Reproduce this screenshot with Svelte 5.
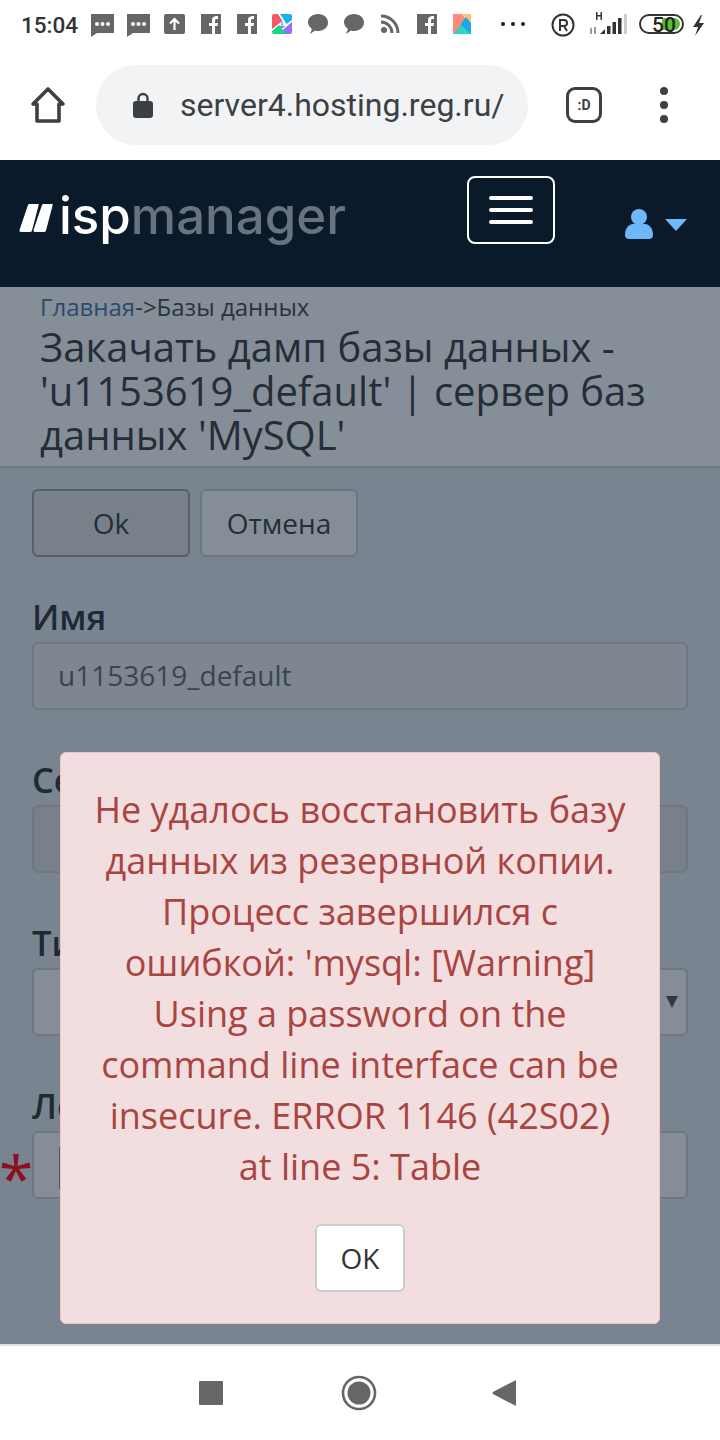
<script>
  const fields = [
    { label: "Имя", value: "u1153619_default", kind: "readonly" },
    { label: "Сервер", value: "", kind: "dim" },
    { label: "Тип", value: "", kind: "select" },
    { label: "Логин", value: "", kind: "required" }
  ];
</script>

<div class="phone">
  <div class="status">
    <span class="time">15:04</span>
    <svg class="icons" width="720" height="50" viewBox="0 0 720 50">
      <!-- chat -->
      <path fill="#666" d="M91 14h23v19H97l-6 4z"/>
      <g fill="#fff"><circle cx="97" cy="24" r="2"/><circle cx="102.500" cy="24" r="2"/><circle cx="108" cy="24" r="2"/></g>
      <path fill="#666" d="M127 14h23v19h-17l-6 4z"/>
      <g fill="#fff"><circle cx="133" cy="24" r="2"/><circle cx="138.500" cy="24" r="2"/><circle cx="144" cy="24" r="2"/></g>
      <!-- upload -->
      <rect x="164" y="14" width="21" height="20" rx="2" fill="#666"/>
      <path fill="none" stroke="#fff" stroke-width="2.200" d="M174.500 30v-11M170 23.500l4.500-4.500 4.500 4.500"/>
      <!-- fb -->
      <rect x="201" y="14" width="20" height="20" fill="#666"/>
      <path fill="#fff" d="M212 34v-8h-3v-3h3v-3c0-3 2-4 6-4v3c-2 0-3 0-3 2v2h3l-.5 3H215v8z"/>
      <rect x="237" y="14" width="20" height="20" fill="#666"/>
      <path fill="#fff" d="M248 34v-8h-3v-3h3v-3c0-3 2-4 6-4v3c-2 0-3 0-3 2v2h3l-.5 3H251v8z"/>
      <!-- colored app -->
      <path fill="#f4596b" d="M272 16q0-2 2-2h4l4.500 7-10.500 8z"/>
      <path fill="#18b4f0" d="M280 14h10q2 0 2 2v4l-5.500 4z"/>
      <path fill="#9b6cf5" d="M292 22v10q0 2-2 2h-5l-3.500-3z"/>
      <path fill="#16d68c" d="M272 31l7-6 7 9h-12q-2 0-2-2z"/>
      <path fill="none" stroke="#5a9bd8" stroke-width="1.300" d="M282 22v5M279.500 26q2.500 3 5 0"/>
      <!-- bubbles -->
      <path fill="#666" d="M318 14c6 0 10 4 10 8.500S324 31 318 31c-1 0-2 0-3-.5L310 34l2-5c-2-1.500-4-4-4-6.500 0-4.500 4-8.500 10-8.500z"/>
      <path fill="#666" d="M354 14c6 0 10 4 10 8.500S360 31 354 31c-1 0-2 0-3-.5L346 34l2-5c-2-1.500-4-4-4-6.500 0-4.500 4-8.500 10-8.500z"/>
      <!-- rss -->
      <circle cx="384" cy="30" r="3" fill="#666"/>
      <path fill="none" stroke="#666" stroke-width="3" d="M381 22a11 11 0 0 1 11 11M381 16a17 17 0 0 1 17 17"/>
      <rect x="417" y="14" width="20" height="20" fill="#666"/>
      <path fill="#fff" d="M428 34v-8h-3v-3h3v-3c0-3 2-4 6-4v3c-2 0-3 0-3 2v2h3l-.5 3H431v8z"/>
      <!-- second colored app -->
      <path fill="#ff8a7a" d="M453 14h9l9 11-5-1-9 10h-4z"/>
      <path fill="#ffc56e" d="M462 14h9v9z"/>
      <path fill="#1aa9e8" d="M471 23v11h-1l-10-9 6-8z"/>
      <path fill="#2fd4c0" d="M453 34l8-9 10 9z"/>
      <!-- dots -->
      <g fill="#222"><rect x="501" y="22" width="4" height="4" rx="2"/><rect x="511" y="22" width="4" height="4" rx="2"/><rect x="521" y="22" width="4" height="4" rx="2"/></g>
      <!-- R -->
      <circle cx="563" cy="25" r="10.500" fill="none" stroke="#333" stroke-width="2"/>
      <path fill="none" stroke="#333" stroke-width="2" d="M560 31V20h4a3 3 0 0 1 0 6h-4M564 26l3 5"/>
      <!-- signal -->
      <path fill="#333" d="M596 12h1.500v3h3v-3h1.500v8h-1.500v-3.500h-3V20H596z"/>
      <path fill="#999" d="M590 29l2-2v7h-2zM594 27h2v7h-2z"/>
      <path fill="#333" d="M600 34l5-5v5zM607 26h3.500v8H607zM612.500 22h3.500v12h-3.500zM618 18h3.500v16H618z"/>
      <rect x="624" y="14" width="3" height="20" fill="#ccc"/>
      <!-- battery -->
      <rect x="640" y="15" width="43" height="18" rx="9" fill="none" stroke="#333" stroke-width="2"/>
      <path fill="#5cc030" d="M662 18h12a6 6 0 0 1 0 12h-12z"/>
      <path fill="#333" d="M701 15l-8 12h5l-3 9 9-13h-5l3-8z"/>
    </svg>
    <span class="batt">50</span>
  </div>

  <div class="toolbar">
    <svg class="home" width="36" height="38" viewBox="0 0 36 38">
      <path fill="none" stroke="#3c4043" stroke-width="3.600" stroke-linejoin="round" d="M18 3L3 18h4v17h22V18h4z"/>
    </svg>
    <div class="omni">
      <svg width="20" height="26" viewBox="0 0 20 26">
        <path fill="none" stroke="#3c4043" stroke-width="2.400" d="M5.500 11V6.500a4.500 4.500 0 0 1 9 0V11"/>
        <rect x="0" y="9" width="20" height="17" rx="3" fill="#3c4043"/>
      </svg>
      <span>server4.hosting.reg.ru/</span>
    </div>
    <div class="tabs"><span>:D</span></div>
    <svg class="kebab" width="10" height="36" viewBox="0 0 10 36">
      <g fill="#3c4043"><circle cx="5" cy="4" r="4"/><circle cx="5" cy="18" r="4"/><circle cx="5" cy="32" r="4"/></g>
    </svg>
  </div>

  <header class="top">
    <div class="logo">
      <svg width="34" height="28" viewBox="0 0 34 28">
        <path fill="#fff" d="M9 1q.4-1 1.500-1H19q1 0 .7 1L13 26.500q-.4 1.500-2 1.500H2q-2 0-1.500-2zM23 1q.4-1 1.500-1H33q1 0 .7 1L27 26.500q-.4 1.500-2 1.500h-9q-2 0-1.500-2z"/>
      </svg>
      <span class="isp">isp</span><span class="mgr">manager</span>
    </div>
    <button class="burger" aria-label="menu"><i></i><i></i><i></i></button>
    <div class="user">
      <svg width="30" height="32" viewBox="0 0 30 32">
        <circle cx="15" cy="9" r="8" fill="#6fb8f8"/>
        <path fill="#6fb8f8" d="M1 27c0-7 4-11 8-11h12c4 0 8 4 8 11 0 3-2 4-4 4H5c-2 0-4-1-4-4z"/>
      </svg>
      <svg width="22" height="13" viewBox="0 0 22 13"><path fill="#6fb8f8" d="M0 1h22L11 13z"/></svg>
    </div>
  </header>

  <main class="content">
    <section class="head">
      <div class="crumbs"><a href="#top">Главная</a>-&gt;Базы данных</div>
      <h1>Закачать дамп базы данных - 'u1153619_default' | сервер баз данных 'MySQL'</h1>
    </section>
    <section class="form">
      <div class="actions">
        <button class="act primary">Ok</button>
        <button class="act">Отмена</button>
      </div>
      {#each fields as f}
        <div class="field">
          <div class="lbl">{f.label}</div>
          <div class="inp {f.kind}">
            {f.value}
            {#if f.kind === "select"}<span class="arrow"></span>{/if}
            {#if f.kind === "required"}<span class="star">*</span><span class="cursor"></span>{/if}
          </div>
        </div>
      {/each}
    </section>

    <div class="modal">
      <p>Не удалось восстановить базу данных из резервной копии. Процесс завершился с ошибкой: 'mysql: [Warning] Using a password on the command line interface can be insecure. ERROR 1146 (42S02) at line 5: Table</p>
      <button class="ok">OK</button>
    </div>
  </main>

  <nav class="bottom">
    <svg width="24" height="24" viewBox="0 0 24 24"><rect width="24" height="24" rx="1" fill="#666"/></svg>
    <svg width="36" height="36" viewBox="0 0 36 36">
      <circle cx="18" cy="18" r="16" fill="none" stroke="#666" stroke-width="2.600"/>
      <circle cx="18" cy="18" r="11.500" fill="#666"/>
    </svg>
    <svg width="24" height="26" viewBox="0 0 24 26"><path fill="#666" d="M24 1v24q0 1-1 .5L1 14q-1-1 0-2L23 .500q1-.5 1 .5z"/></svg>
  </nav>
</div>

<style>
  :global(body) {
    margin: 0;
    background: #fff;
  }

  .phone {
    width: 720px;
    height: 1440px;
    display: flex;
    flex-direction: column;
    overflow: hidden;
    font-family: "Open Sans", sans-serif;
  }

  .status {
    position: relative;
    height: 50px;
    flex: none;
    background: #fff;
  }

  .icons {
    position: absolute;
    top: 0;
    left: 0;
  }

  .time {
    position: absolute;
    left: 21px;
    top: 12px;
    font: 500 22.500px/26px Roboto, sans-serif;
    color: #333;
  }

  .batt {
    position: absolute;
    left: 652px;
    top: 12px;
    font: 500 21px/26px Roboto, sans-serif;
    color: #222;
  }

  .toolbar {
    height: 110px;
    flex: none;
    display: flex;
    align-items: center;
    background: #fff;
  }

  .home {
    margin-left: 30px;
  }

  .omni {
    margin-left: 30px;
    width: 432px;
    height: 80px;
    box-sizing: border-box;
    padding-left: 37px;
    display: flex;
    align-items: center;
    gap: 27px;
    border-radius: 40px;
    background: #f1f3f4;
    color: #3c4043;
    font: 400 32px/36px Roboto, sans-serif;
    white-space: nowrap;
  }

  .tabs {
    margin-left: 38px;
    width: 36px;
    height: 36px;
    box-sizing: border-box;
    border: 3.500px solid #3c4043;
    border-radius: 9px;
    display: flex;
    align-items: center;
    justify-content: center;
    color: #3c4043;
    font: 700 14px/1 Roboto, sans-serif;
  }

  .kebab {
    margin-left: 57px;
  }

  .top {
    height: 127px;
    flex: none;
    position: relative;
    display: flex;
    align-items: flex-start;
    background: #0a1a2a;
  }

  .logo {
    margin: 26px 0 0 19px;
    width: 429px;
    display: flex;
    align-items: center;
    font: 500 51px/60px Inter, sans-serif;
    white-space: nowrap;
  }

  .logo svg {
    margin: 4px 6px 0 0;
  }

  .isp {
    color: #fff;
  }

  .mgr {
    color: #68737f;
  }

  .burger {
    margin: 16px 0 0 19px;
    width: 88px;
    height: 68px;
    padding: 0;
    box-sizing: border-box;
    border: 2px solid #fff;
    border-radius: 8px;
    background: transparent;
    display: flex;
    flex-direction: column;
    align-items: center;
    justify-content: center;
    gap: 8px;
  }

  .burger i {
    display: block;
    width: 44px;
    height: 4px;
    border-radius: 2px;
    background: #fff;
  }

  .user {
    margin: 48px 0 0 69px;
    display: flex;
    align-items: center;
    gap: 11px;
  }

  .content {
    position: relative;
    flex: 1;
    overflow: hidden;
    background: #7a8491;
  }

  .head {
    height: 181px;
    box-sizing: border-box;
    padding: 5px 40px 0;
    background: #868f97;
    border-bottom: 2px solid #6d7883;
  }

  .crumbs {
    font-size: 24px;
    line-height: 30px;
    color: #2a333c;
  }

  .crumbs a {
    color: #2c4a6c;
    text-decoration: none;
  }

  h1 {
    margin: 3px 0 0;
    font-size: 40px;
    line-height: 44px;
    font-weight: 400;
    color: #252e37;
  }

  .form {
    padding: 21px 32px 0;
  }

  .actions {
    display: flex;
    gap: 10px;
    margin-bottom: 42px;
  }

  .act {
    width: 158px;
    height: 68px;
    padding: 0;
    box-sizing: border-box;
    border: 2px solid #6b7682;
    border-radius: 6px;
    background: #858e96;
    color: #252e37;
    font: 400 28px/1 "Open Sans", sans-serif;
  }

  .act.primary {
    background: #78818a;
    border-color: #55606b;
  }

  .field {
    height: 163px;
  }

  .lbl {
    font-size: 34.500px;
    line-height: 36px;
    font-weight: 600;
    color: #1e2a33;
    white-space: nowrap;
  }

  .inp {
    position: relative;
    margin-top: 7px;
    height: 68px;
    box-sizing: border-box;
    padding-left: 24px;
    border: 2px solid #6d7883;
    border-radius: 6px;
    background: #7e8791;
    color: #3a4450;
    font-size: 28px;
    line-height: 62px;
  }

  .inp.dim {
    background: #78808a;
  }

  .inp.select,
  .inp.required {
    background: #858e96;
  }

  .arrow {
    position: absolute;
    right: 8px;
    top: 26px;
    border-left: 6px solid transparent;
    border-right: 6px solid transparent;
    border-top: 12px solid #303843;
  }

  .star {
    position: absolute;
    left: -35px;
    top: 13px;
    font-size: 62px;
    line-height: 62px;
    color: #8a1022;
  }

  .cursor {
    position: absolute;
    left: 25px;
    top: 14px;
    width: 2px;
    height: 42px;
    background: #4a545f;
  }

  .modal {
    position: absolute;
    left: 60px;
    top: 465px;
    width: 600px;
    height: 572px;
    box-sizing: border-box;
    padding: 31px 30px 0;
    border: 1px solid #f0c4c8;
    border-radius: 6px;
    background: #f2dede;
    color: #a94442;
    text-align: center;
  }

  .modal p {
    margin: 0;
    font-size: 36px;
    line-height: 51px;
  }

  .ok {
    margin-top: 32px;
    width: 90px;
    height: 68px;
    padding: 0;
    box-sizing: border-box;
    border: 2px solid #ccc;
    border-radius: 6px;
    background: #fff;
    color: #333;
    font: 400 28px/1 "Open Sans", sans-serif;
  }

  .bottom {
    height: 96px;
    flex: none;
    box-sizing: border-box;
    border-top: 2px solid #dfe1e3;
    background: #fff;
    display: flex;
    align-items: center;
    padding-left: 199px;
    gap: 118px;
  }

  .bottom svg:nth-child(3) {
    margin-left: -3px;
  }
</style>
